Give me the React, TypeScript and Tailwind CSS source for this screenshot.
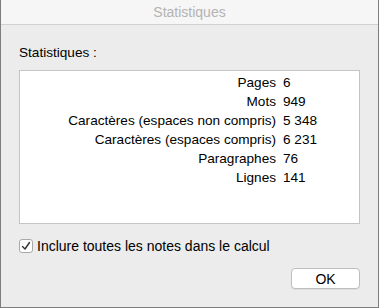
import React from 'react';

const stats: [string, string][] = [
  ['Pages', '6'],
  ['Mots', '949'],
  ['Caractères (espaces non compris)', '5 348'],
  ['Caractères (espaces compris)', '6 231'],
  ['Paragraphes', '76'],
  ['Lignes', '141'],
];

export default function App() {
  return (
    <div
      className="w-[379px] h-[308px] flex flex-col bg-[#ececec] border border-t-0 border-[#7d7d7d] text-[13.6px] text-black overflow-hidden"
      style={{ fontFamily: '"Liberation Sans", Arial, sans-serif' }}
    >
      {/* title bar */}
      <div className="h-[25px] shrink-0 flex items-center justify-center bg-[#f6f6f6] border-b border-[#d1d1d1] text-[#b3b3b3] text-[14px]">
        Statistiques
      </div>

      <div className="flex flex-col px-[18px] pt-[20px]">
        <div className="leading-[16px]">Statistiques :</div>

        <div className="mt-[9px] h-[154px] w-[341px] bg-white border border-[#c4c4c4] pt-[2px]">
          {stats.map(([label, value]) => (
            <div key={label} className="flex h-[19px] items-center leading-[16px]">
              <span className="w-[256px] text-right">{label}</span>
              <span className="ml-[7px]">{value}</span>
            </div>
          ))}
        </div>

        <label className="mt-[14px] flex items-center gap-[4px] leading-[16px] text-[14px]">
          <span className="w-[14px] h-[14px] flex items-center justify-center bg-white border border-[#a9a9a9] rounded-[3px]">
            <svg width="10" height="10" viewBox="0 0 10 10" fill="none">
              <path d="M1.5 5.5 L4 8 L8.5 1.5" stroke="#333" strokeWidth="1.4" strokeLinecap="round" strokeLinejoin="round" />
            </svg>
          </span>
          Inclure toutes les notes dans le calcul
        </label>

        <div className="mt-[14px] flex justify-end">
          <button className="w-[69px] h-[21px] bg-white border border-[#bdbdbd] rounded-[4px] shadow-[0_1px_0_rgba(0,0,0,0.06)] leading-[16px] text-[14px]">
            OK
          </button>
        </div>
      </div>
    </div>
  );
}
